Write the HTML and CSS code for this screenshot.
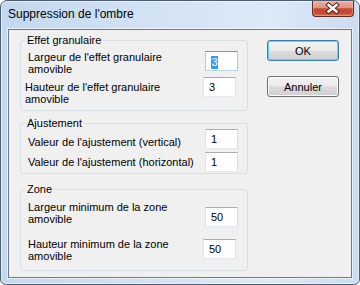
FILE: index.html
```html
<!DOCTYPE html>
<html lang="fr">
<head>
    <meta charset="UTF-8">
    <title>Suppression de l'ombre</title>
    <link rel="stylesheet" href="styles.css">
</head>
<body>

<div class="window">
    <div class="titlebar">
        <span class="title">Suppression de l'ombre</span>
        <div class="close-btn">
            <svg width="40" height="15" viewBox="0 0 40 15">
                <path d="M15.5 4 L23.5 10.5 M23.5 4 L15.5 10.5" stroke="#4a2219" stroke-width="4.4" stroke-linecap="square" fill="none"/>
                <path d="M15.5 4 L23.5 10.5 M23.5 4 L15.5 10.5" stroke="#ffffff" stroke-width="2.4" stroke-linecap="square" fill="none"/>
            </svg>
        </div>
    </div>

    <div class="client">
        <div class="groups">
            <!-- Effet granulaire -->
            <fieldset class="group group-grain">
                <legend>Effet granulaire</legend>
                <div class="row row-a">
                    <span class="label">Largeur de l'effet granulaire amovible</span>
                    <span class="edit edit-focus"><span class="selected">3</span></span>
                </div>
                <div class="row row-b">
                    <span class="label">Hauteur de l'effet granulaire amovible</span>
                    <span class="edit">3</span>
                </div>
            </fieldset>

            <!-- Ajustement -->
            <fieldset class="group group-adjust">
                <legend>Ajustement</legend>
                <div class="row row-c">
                    <span class="label label-single">Valeur de l'ajustement (vertical)</span>
                    <span class="edit">1</span>
                </div>
                <div class="row row-d">
                    <span class="label label-single">Valeur de l'ajustement (horizontal)</span>
                    <span class="edit">1</span>
                </div>
            </fieldset>

            <!-- Zone -->
            <fieldset class="group group-zone">
                <legend>Zone</legend>
                <div class="row row-e">
                    <span class="label">Largeur minimum de la zone amovible</span>
                    <span class="edit">50</span>
                </div>
                <div class="row row-f">
                    <span class="label">Hauteur minimum de la zone amovible</span>
                    <span class="edit">50</span>
                </div>
            </fieldset>
        </div>

        <div class="buttons">
            <button type="button" class="btn btn-default">OK</button>
            <button type="button" class="btn">Annuler</button>
        </div>
    </div>
</div>

</body>
</html>
```

FILE: styles.css
```css
/* Page */
body {
    margin: 0;
    font-family: "Liberation Sans", Arial, sans-serif;
    font-size: 11px;
    color: #000;
}

/* Fenêtre */
.window {
    width: 360px;
    height: 285px;
    box-sizing: border-box;
    border: 1px solid #4d5d70;
    border-radius: 7px 7px 6px 6px;
    background: linear-gradient(to right, #c3d8ee, #d3e3f4 45%, #dce9f7 75%, #cadcf1);
    box-shadow: inset 0 0 0 1px rgba(255, 255, 255, 0.55);
    padding: 0 7px 6px;
    display: flex;
    flex-direction: column;
    overflow: hidden;
}

/* Barre de titre */
.titlebar {
    height: 28px;
    display: flex;
    align-items: flex-start;
}

.title {
    margin-top: 6px;
    font-size: 12px;
    line-height: 14px;
}

.close-btn {
    margin-left: auto;
    margin-right: -2px;
    width: 42px;
    height: 16px;
    box-sizing: border-box;
    border: 1px solid #5a2a20;
    border-top: none;
    border-radius: 0 0 4px 4px;
    background: linear-gradient(#eab0a2 0%, #df9381 45%, #c8462e 52%, #c44a33 80%, #d9704f 100%);
    box-shadow: inset 0 0 0 1px rgba(255, 220, 210, 0.35);
}

.close-btn svg {
    display: block;
}

/* Zone cliente */
.client {
    flex: 1;
    display: flex;
    align-items: flex-start;
    background: #f0f0f0;
    border: 1px solid #6f7b89;
    box-shadow: 0 0 0 1px rgba(255, 255, 255, 0.6);
}

.groups {
    padding: 4px 0 0 11px;
}

/* Cadres de groupe */
.group {
    margin: 0;
    min-width: 0;
    width: 228px;
    box-sizing: border-box;
    border: 1px solid #d5dfe5;
    border-radius: 3px;
    padding: 0;
}

.group legend {
    margin-left: 4px;
    padding: 0 2px;
    line-height: 13px;
}

.group-grain {
    padding-bottom: 5px;
}

.group-adjust {
    margin-top: 6px;
    padding-bottom: 1px;
}

.group-zone {
    margin-top: 9px;
    padding-bottom: 8px;
}

/* Lignes libellé + champ */
.row {
    display: flex;
    align-items: flex-start;
    padding: 0 9px 0 7px;
}

.label {
    width: 150px;
    line-height: 12px;
}

.label-single {
    width: auto;
    white-space: nowrap;
}

.row-a { margin-top: 4px; }
.row-b { margin-top: 2px; padding-left: 4px; padding-right: 11px; }
.row-b .label { margin-top: 4px; }

.row-c { margin-top: -1px; }
.row-c .label { margin-top: 7px; }
.row-d { margin-top: 3px; }
.row-d .label { margin-top: 4px; }

.row-e { margin-top: 5px; }
.row-e .edit { margin-top: 6px; }
.row-f { margin-top: 11px; padding-right: 11px; }
.row-f .edit { margin-top: 1px; }

/* Champs de saisie */
.edit {
    margin-left: auto;
    width: 33px;
    height: 20px;
    box-sizing: border-box;
    border: 1px solid;
    border-color: #abadb3 #dbdfe6 #e3e9ef #e2e3ea;
    background: #fff;
    padding-left: 5px;
    line-height: 18px;
}

.edit-focus {
    border-color: #5d9ad6 #a9cbeb #b9d7f1 #a9cbeb;
}

.selected {
    display: inline-block;
    background: #3399ff;
    color: #fff;
    line-height: 13px;
    padding: 0 0.5px;
    vertical-align: middle;
}

/* Boutons */
.buttons {
    display: flex;
    flex-direction: column;
    gap: 15px;
    margin: 10px 0 0 19px;
}

.btn {
    width: 72px;
    height: 21px;
    padding: 0;
    font-family: "Liberation Sans", Arial, sans-serif;
    font-size: 11px;
    color: #000;
    border: 1px solid #707070;
    border-radius: 3px;
    background: linear-gradient(#f2f2f2 0%, #ebebeb 50%, #dddddd 50%, #cfcfcf 100%);
    box-shadow: inset 0 0 0 1px #fbfbfb;
}

.btn-default {
    border-color: #3c7fb1;
    box-shadow: inset 0 0 0 1px #5fd2f7;
}
```
